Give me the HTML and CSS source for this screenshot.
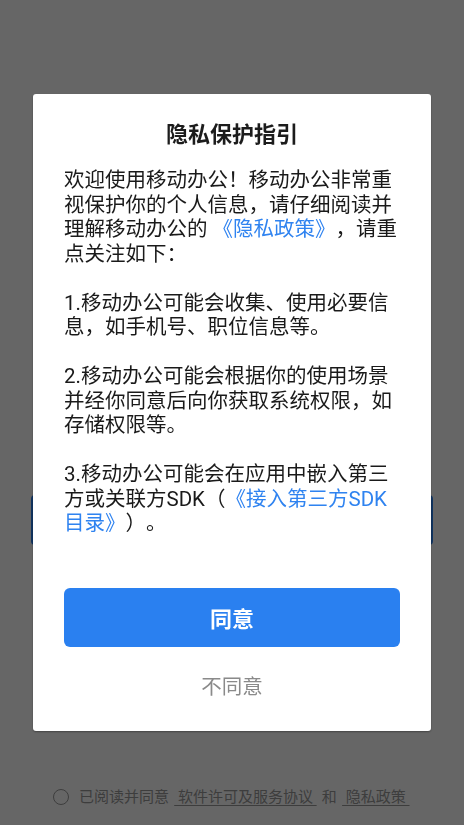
FILE: index.html
```html
<!DOCTYPE html>
<html lang="zh-CN">
<head>
<meta charset="utf-8">
<title>隐私保护指引</title>
<link rel="stylesheet" href="styles.css">
</head>
<body>
<div class="page">
  <div class="hero"></div>
  <div class="login-wrap"><button class="login-btn" aria-label="登录"></button></div>
  <div class="spacer"></div>
  <div class="agreement">
    <span class="radio"></span>
    <span class="agree-text">已阅读并同意 <span class="agree-link">&nbsp;软件许可及服务协议&nbsp;</span> 和 <span class="agree-link">&nbsp;隐私政策&nbsp;</span></span>
  </div>
</div>

<div class="overlay">
  <div class="dialog">
    <div class="dialog-title">隐私保护指引</div>
    <div class="dialog-body">
      <p>欢迎使用移动办公！移动办公非常重视保护你的个人信息，请仔细阅读并理解移动办公的 <span class="link">《隐私政策》</span>，请重点关注如下：</p>
      <p>1.移动办公可能会收集、使用必要信息，如手机号、职位信息等。</p>
      <p>2.移动办公可能会根据你的使用场景并经你同意后向你获取系统权限，如存储权限等。</p>
      <p>3.移动办公可能会在应用中嵌入第三方或关联方SDK（<span class="link">《接入第三方SDK目录》</span>）。</p>
    </div>
    <button class="btn-agree">同意</button>
    <div class="btn-disagree">不同意</div>
  </div>
</div>
</body>
</html>
```

FILE: styles.css
```css
* { box-sizing: border-box; }

html, body {
  margin: 0;
  padding: 0;
}

body {
  width: 464px;
  height: 825px;
  overflow: hidden;
  background: #ffffff;
  font-family: "Roboto", "Noto Sans CJK SC", sans-serif;
  text-spacing-trim: space-all;
}

.page {
  height: 825px;
  display: flex;
  flex-direction: column;
}

.hero {
  height: 495px;
}

.login-wrap {
  padding: 0 31px;
}

.login-btn {
  display: block;
  width: 100%;
  height: 50px;
  border: none;
  border-radius: 4px;
  background: #2a80f0;
}

.spacer {
  flex: 1;
}

.agreement {
  display: flex;
  align-items: center;
  justify-content: center;
  padding: 0 0 18px 0;
  height: 38px;
  color: #999999;
  font-size: 15px;
  line-height: 20px;
}

.radio {
  width: 16px;
  height: 16px;
  border: 1.5px solid #999999;
  border-radius: 50%;
  margin-right: 10px;
  flex: none;
}

.agree-link {
  text-decoration: underline;
  text-underline-offset: 3px;
  padding: 0 1.5px;
}

.overlay {
  position: fixed;
  inset: 0;
  background: rgba(0, 0, 0, 0.6);
  display: flex;
  justify-content: center;
  align-items: flex-start;
  padding-top: 94px;
}

.dialog {
  width: 398px;
  background: #ffffff;
  border-radius: 3px;
  box-shadow: 0 1px 2px rgba(0, 0, 0, 0.35);
  padding: 26px 31px 29px;
  display: flex;
  flex-direction: column;
}

.dialog-title {
  text-align: center;
  font-size: 22px;
  font-weight: 700;
  line-height: 30px;
  color: #1c1c1c;
}

.dialog-body {
  margin-top: 18px;
  font-size: 20.5px;
  line-height: 24.5px;
  color: #1a1a1a;
}

.dialog-body p {
  margin: 0 0 24.5px;
}

.dialog-body p:last-child {
  margin-bottom: 0;
}

.link {
  color: #2f83f0;
}

.btn-agree {
  margin-top: 52px;
  height: 59px;
  border: none;
  border-radius: 6px;
  background: #2a80f0;
  color: #ffffff;
  font-family: inherit;
  font-size: 22px;
  font-weight: 700;
}

.btn-disagree {
  margin-top: 25px;
  text-align: center;
  font-size: 20.5px;
  line-height: 30px;
  color: #8a8a8a;
}
```
